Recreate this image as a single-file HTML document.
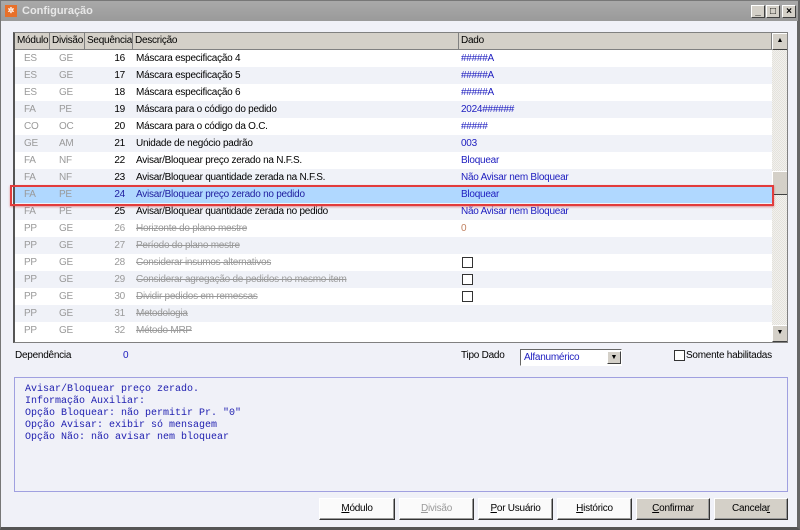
<!DOCTYPE html>
<html><head><meta charset="utf-8"><style>
*{box-sizing:border-box;margin:0;padding:0}
body{width:800px;height:530px;overflow:hidden;font-family:"Liberation Sans",sans-serif;font-size:10px;letter-spacing:-0.25px;background:#6b6b6b;position:relative}
.win{position:absolute;left:0;top:0;width:800px;height:530px;background:#f0f1f8;border:1px solid #777;border-right:3px solid #666;border-bottom:3px solid #555}
.title{position:absolute;left:0;top:0;width:797px;height:20px;background:linear-gradient(#a9a9a9,#9a9a9a);color:#e8e8e8;font-weight:bold;font-size:11px;letter-spacing:0;line-height:20px;padding-left:21px}
.ico{position:absolute;left:4px;top:4px;width:12px;height:12px;background:#e8702a;color:#fff;font-size:8px;line-height:12px;text-align:center}
.tb{position:absolute;top:4px;width:14px;height:13px;background:#d4d0c8;border:1px solid;border-color:#fff #404040 #404040 #fff;font-size:10px;line-height:11px;text-align:center;color:#000;font-weight:bold;letter-spacing:0}
.a{position:absolute}
.grid{position:absolute;left:12px;top:31px;width:775px;height:311px;border:1px solid #808080;border-left:2px solid #555;background:#fff;overflow:hidden}
.hdr{position:absolute;top:0;height:17px;background:#d4d0c8;border-right:1px solid #808080;border-bottom:1px solid #808080;padding-left:2px;line-height:16px;color:#000;white-space:nowrap;overflow:hidden}
.row{position:absolute;left:0;width:757px;height:17px;line-height:17px}
.c{position:absolute;top:0;white-space:nowrap}
.g{color:#9a9a9a}
.blue{color:#2020c0}
.s{text-decoration:line-through;color:#9a9a9a}
.cb{position:absolute;width:11px;height:11px;border:1px solid #333;background:#fff}
.btn{position:absolute;top:497px;height:22px;background:#fafafa;border:1px solid;border-color:#fff #333 #333 #fff;box-shadow:inset -1px -1px #999;text-align:center;line-height:20px;color:#000}
.btn.d{color:#999}
.btn.gr{background:#d4d0c8}
</style></head><body>
<div class="win">
<div class="title"><div class="ico">✲</div>Configuração</div>
<div class="tb" style="left:750px">_</div><div class="tb" style="left:765px">□</div><div class="tb" style="left:781px">×</div>

<div class="grid">
<div class="hdr" style="left:0;width:35px">Módulo</div>
<div class="hdr" style="left:35px;width:35px">Divisão</div>
<div class="hdr" style="left:70px;width:48px">Sequência</div>
<div class="hdr" style="left:118px;width:326px">Descrição</div>
<div class="hdr" style="left:444px;width:313px">Dado</div>
<div style="position:absolute;left:757px;top:0;width:16px;height:309px;background:repeating-conic-gradient(#e4e2dc 0 25%,#f2f1ee 0 50%) 0 0/2px 2px"></div>
<div class="tb" style="left:757px;top:0;width:16px;height:17px;font-size:7px;line-height:14px">▲</div>
<div class="tb" style="left:757px;top:138px;width:16px;height:24px"></div>
<div class="tb" style="left:757px;top:292px;width:16px;height:17px;font-size:7px;line-height:14px">▼</div>
<div id="rows"></div>
</div>
<div class="a" style="left:9px;top:184px;width:764px;height:21px;border:2px solid #e23c3c;box-shadow:0 1px 2px rgba(200,0,0,.4)"></div>

<div class="a" style="left:14px;top:349px">Dependência</div>
<div class="a blue" style="left:122px;top:349px">0</div>
<div class="a" style="left:460px;top:349px">Tipo Dado</div>
<div class="a" style="left:519px;top:348px;width:102px;height:17px;background:#fff;border:1px solid;border-color:#666 #fff #fff #666;color:#2020c0;padding-left:3px;line-height:15px">Alfanumérico<div class="tb" style="left:86px;top:1px;width:14px;height:13px;font-size:7px;line-height:11px">▼</div></div>
<div class="cb" style="left:673px;top:349px"></div>
<div class="a" style="left:685px;top:349px">Somente habilitadas</div>

<div class="a" style="left:13px;top:376px;width:774px;height:115px;border:1px solid #a0a0e0;background:#f0f1f8;font-family:'Liberation Mono',monospace;font-size:10px;letter-spacing:0;color:#2020b0;line-height:12px;padding:6px 0 0 10px;white-space:pre">Avisar/Bloquear preço zerado.
Informação Auxiliar:
Opção Bloquear: não permitir Pr. "0"
Opção Avisar: exibir só mensagem
Opção Não: não avisar nem bloquear</div>

<div class="btn" style="left:318px;width:76px"><u>M</u>ódulo</div>
<div class="btn d" style="left:398px;width:75px"><u>D</u>ivisão</div>
<div class="btn" style="left:477px;width:75px"><u>P</u>or Usuário</div>
<div class="btn" style="left:556px;width:75px"><u>H</u>istórico</div>
<div class="btn gr" style="left:635px;width:74px"><u>C</u>onfirmar</div>
<div class="btn gr" style="left:713px;width:74px">Cancela<u>r</u></div>
</div>
<script>
var d=[["ES","GE",16,"Máscara especificação 4","#####A"],["ES","GE",17,"Máscara especificação 5","#####A"],["ES","GE",18,"Máscara especificação 6","#####A"],["FA","PE",19,"Máscara para o código do pedido","2024######"],["CO","OC",20,"Máscara para o código da O.C.","#####"],["GE","AM",21,"Unidade de negócio padrão","003"],["FA","NF",22,"Avisar/Bloquear preço zerado na N.F.S.","Bloquear"],["FA","NF",23,"Avisar/Bloquear quantidade zerada na N.F.S.","Não Avisar nem Bloquear"],["FA","PE",24,"Avisar/Bloquear preço zerado no pedido","Bloquear"],["FA","PE",25,"Avisar/Bloquear quantidade zerada no pedido","Não Avisar nem Bloquear"],["PP","GE",26,"Horizonte do plano mestre","0"],["PP","GE",27,"Período do plano mestre",""],["PP","GE",28,"Considerar insumos alternativos","cb"],["PP","GE",29,"Considerar agregação de pedidos no mesmo item","cb"],["PP","GE",30,"Dividir pedidos em remessas","cb"],["PP","GE",31,"Metodologia",""],["PP","GE",32,"Método MRP",""]];
var h="";d.forEach(function(r,i){var y=17+17*i,bg=i==8?"#b0d8ff":(i%2?"#f0f2f8":"#fff"),st=i>=10;
var dv=r[4]=="cb"?'<div class="cb" style="left:447px;top:3px"></div>':'<div class="c" style="left:446px;color:'+(i==10?'#c08060':'#2020c0')+'">'+r[4]+'</div>';
h+='<div class="row" style="top:'+y+'px;background:'+bg+'"><div class="c g" style="left:9px">'+r[0]+'</div><div class="c g" style="left:44px">'+r[1]+'</div><div class="c '+(st?'g':'')+'" style="left:70px;width:40px;text-align:right;'+(i==8?'color:#2020a0':'')+'">'+r[2]+'</div><div class="c '+(st?'s':'')+'" style="left:121px;'+(i==8?'color:#2020a0':'')+'">'+r[3]+'</div>'+dv+'</div>';});
document.getElementById("rows").innerHTML=h;
</script>
</body></html>
